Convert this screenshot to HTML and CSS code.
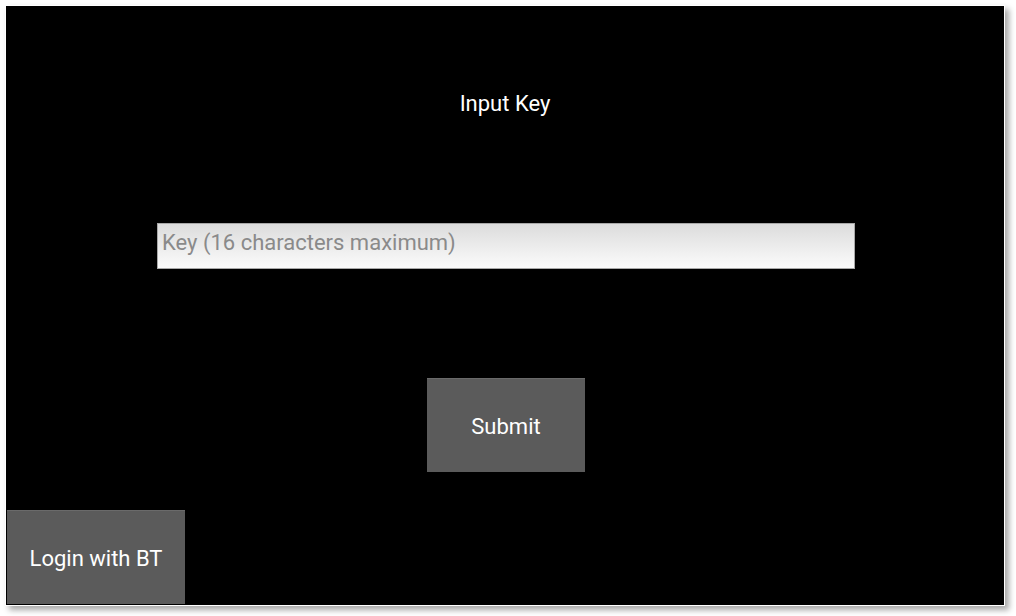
FILE: index.html
```html
<!DOCTYPE html>
<html>
<head>
<meta charset="utf-8">
<link rel="stylesheet" href="styles.css">
</head>
<body>
<div class="screen">
  <div class="title">Input Key</div>
  <div class="key-input">
    <input type="text" placeholder="Key (16 characters maximum)">
  </div>
  <button class="btn submit">Submit</button>
  <button class="btn login">Login with BT</button>
</div>
</body>
</html>
```
FILE: styles.css
```css
html, body {
  margin: 0;
  padding: 0;
  background: #ffffff;
  width: 1016px;
  height: 616px;
  overflow: hidden;
}
body {
  padding: 5px 0 0 5px;
  box-sizing: border-box;
  font-family: Roboto, "Noto Sans", sans-serif;
}
.screen {
  width: 998px;
  height: 599px;
  background: #000;
  border: 1px solid #fff;
  box-shadow: 4px 4px 6px rgba(0, 0, 0, 0.35);
  display: flex;
  flex-direction: column;
  align-items: center;
}
.title {
  margin-top: 85px;
  color: #fff;
  font-size: 22px;
  line-height: 26px;
  height: 26px;
}
.key-input {
  margin-top: 106px;
  width: 698px;
  height: 46px;
  margin-left: 2px;
}
.key-input input {
  width: 100%;
  height: 100%;
  box-sizing: border-box;
  border: 1px solid #a8a8a8;
  background: linear-gradient(#dcdcdc, #fbfbfb);
  padding: 0 4px 8px 4px;
  font-family: Roboto, "Noto Sans", sans-serif;
  font-size: 22px;
  color: #333;
  outline: none;
}
.key-input input::placeholder {
  color: #8a8a8a;
}
.btn {
  background: #5b5b5b;
  color: #fff;
  border: none;
  border-top: 1px solid #6a6a6a;
  font-family: Roboto, "Noto Sans", sans-serif;
  font-size: 22px;
  padding: 2px 0 0 0;
}
.submit {
  margin-top: 109px;
  width: 158px;
  height: 94px;
  margin-left: 2px;
}
.login {
  margin-top: 38px;
  align-self: flex-start;
  margin-left: 1px;
  width: 178px;
  height: 94px;
}
```
